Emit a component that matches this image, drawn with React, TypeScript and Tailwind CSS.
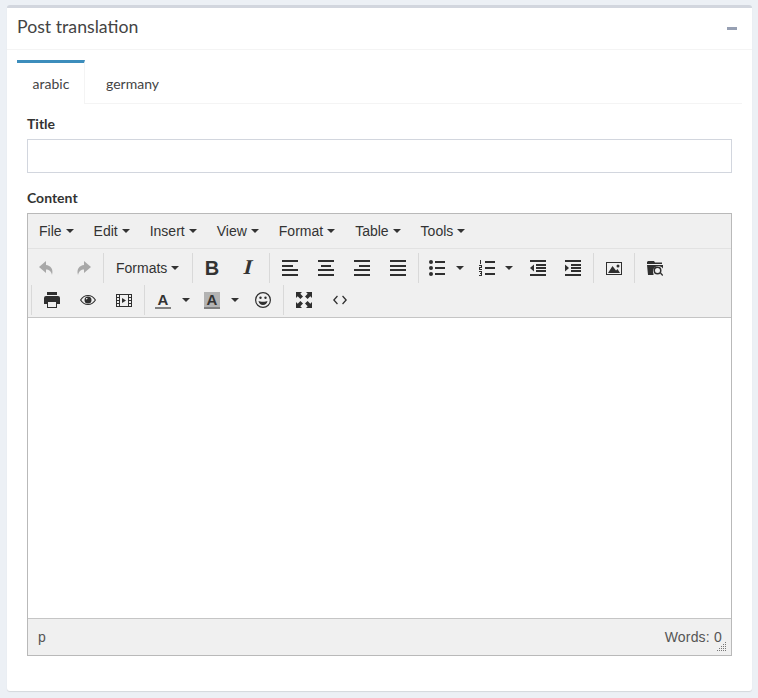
import type { ReactNode } from "react";

const ink = "#2f2f2f";

function Icon({ children, size = 16 }: { children: ReactNode; size?: number }) {
  return (
    <svg width={size} height={size} viewBox="0 0 16 16" fill={ink}>
      {children}
    </svg>
  );
}

function Caret({ color = "#333333" }: { color?: string }) {
  return (
    <svg width="8" height="4" viewBox="0 0 8 4" className="shrink-0">
      <path d="M0 0h8L4 4z" fill={color} />
    </svg>
  );
}

function Btn({ children, w = "w-[36px]" }: { children: ReactNode; w?: string }) {
  return <div className={`${w} h-[30px] flex items-center justify-center`}>{children}</div>;
}

function Group({ children, first, className = "pl-px pr-[2px]" }: { children: ReactNode; first?: boolean; className?: string }) {
  return (
    <div className={`flex h-[30px] ${className} ${first ? "" : "border-l border-[#d9d9d9]"}`}>
      {children}
    </div>
  );
}

const Lines = ({ rows }: { rows: [number, number, number][] }) => (
  <Icon>
    {rows.map(([x, y, w], i) => (
      <rect key={i} x={x} y={y} width={w} height="2" />
    ))}
  </Icon>
);

const UndoIcon = () => (
  <Icon>
    <path fill="#a8a8a8" d="M7 1 0 7l7 6V9.500c3 0 5 1.500 6 5.500 1.800-6-1.500-9.500-6-10z" />
  </Icon>
);

const RedoIcon = () => (
  <Icon>
    <path fill="#a8a8a8" d="M9 1l7 6-7 6V9.500c-3 0-5 1.500-6 5.500C1.200 9 4.500 5.500 9 5z" />
  </Icon>
);

const BulletIcon = () => (
  <Icon>
    <circle cx="2" cy="2" r="2" />
    <circle cx="2" cy="8" r="2" />
    <circle cx="2" cy="14" r="2" />
    <rect x="6" y="1" width="10" height="2" />
    <rect x="6" y="7" width="10" height="2" />
    <rect x="6" y="13" width="10" height="2" />
  </Icon>
);

const NumberIcon = () => (
  <Icon>
    <rect x="1" y="0" width="1" height="4" />
    <path d="M0 5h3v3H1v1h2v1H0V7h2V6H0zM0 11h3v5H0v-1h2v-1H1v-1h1v-1H0z" />
    <rect x="6" y="1" width="10" height="2" />
    <rect x="6" y="7" width="10" height="2" />
    <rect x="6" y="13" width="10" height="2" />
  </Icon>
);

const OutdentIcon = () => (
  <Icon>
    <rect x="0" y="0" width="16" height="2" />
    <rect x="6" y="4" width="10" height="2" />
    <rect x="6" y="7" width="10" height="2" />
    <rect x="6" y="10" width="10" height="2" />
    <rect x="0" y="14" width="16" height="2" />
    <path d="M4 4.500v7L0 8z" />
  </Icon>
);

const IndentIcon = () => (
  <Icon>
    <rect x="0" y="0" width="16" height="2" />
    <rect x="6" y="4" width="10" height="2" />
    <rect x="6" y="7" width="10" height="2" />
    <rect x="6" y="10" width="10" height="2" />
    <rect x="0" y="14" width="16" height="2" />
    <path d="M0 4.500v7L4 8z" />
  </Icon>
);

const ImageIcon = () => (
  <Icon>
    <path fillRule="evenodd" d="M0 2h16v13H0zM1 3v11h14V3z" />
    <circle cx="12" cy="6" r="1.500" />
    <path d="M2 13 6.500 6l3.500 4.500L11.500 9l2.500 4z" />
  </Icon>
);

const BrowseIcon = () => (
  <Icon>
    <path d="M1 1h6l1 1.500h7V4H0V2z" />
    <path d="M0 5h16v3.500A5.500 5.500 0 0 0 6.500 14v1H1z" />
    <path fillRule="evenodd" d="M10.500 6.500a4 4 0 1 0 0 8 4 4 0 0 0 0-8zm0 1.500a2.500 2.500 0 1 1 0 5 2.500 2.500 0 0 1 0-5z" />
    <path d="M13 13.500l1-1 2.300 2.500-1 1z" />
  </Icon>
);

const PrintIcon = () => (
  <Icon>
    <rect x="3" y="0" width="10" height="3" />
    <path d="M0 6a2 2 0 0 1 2-2h12a2 2 0 0 1 2 2v6h-3V9H3v3H0z" />
    <path fillRule="evenodd" d="M3 9h10v7H3zm1 1v5h8v-5z" />
  </Icon>
);

const EyeIcon = () => (
  <Icon>
    <path fill="none" stroke={ink} strokeWidth="1.100" d="M.6 8C2.400 5 5 3.500 8 3.500S13.600 5 15.400 8C13.600 11 11 12.500 8 12.500S2.400 11 .6 8z" />
    <path fillRule="evenodd" d="M8 4.500a3.500 3.500 0 1 0 0 7 3.500 3.500 0 0 0 0-7zM5.800 6h2L6.500 7.800z" />
  </Icon>
);

const MediaIcon = () => (
  <Icon>
    <path
      fillRule="evenodd"
      d="M0 2h16v13H0zM1 3v2h2V3zm0 3v2h2V6zm0 3v2h2V9zm0 3v2h2v-2zM4 3v11h8V3zm9 0v2h2V3zm0 3v2h2V6zm0 3v2h2V9zm0 3v2h2v-2z"
    />
    <path d="M6 6l4 2.500L6 11z" />
  </Icon>
);

const ForeColorIcon = () => (
  <div className="w-[16px] h-[17px] flex flex-col items-center justify-between">
    <span className="text-[15px] leading-[13px] font-bold text-[#333] mt-px">A</span>
    <div className="w-full h-[2px] bg-[#808080]" />
  </div>
);

const BackColorIcon = () => (
  <div className="w-[16px] h-[17px] flex flex-col items-center justify-between bg-[#b3b3b3]">
    <span className="text-[15px] leading-[13px] font-bold text-[#333] mt-px">A</span>
    <div className="w-full h-[2px] bg-[#808080]" />
  </div>
);

const SmileIcon = () => (
  <Icon>
    <circle cx="8" cy="8" r="7.400" fill="none" stroke={ink} strokeWidth="1.200" />
    <circle cx="5.500" cy="5.800" r="1.200" />
    <circle cx="10.500" cy="5.800" r="1.200" />
    <path d="M3.500 9c1.500 1 7.500 1 9 0-.5 2.500-2.200 4-4.500 4s-4-1.500-4.500-4z" />
  </Icon>
);

const FullscreenIcon = () => (
  <Icon>
    <path d="M0 0h6L4.300 1.700 7 4.400 4.400 7 1.700 4.300 0 6z" />
    <path d="M16 0v6l-1.700-1.700L11.600 7 9 4.400l2.700-2.700L10 0z" />
    <path d="M0 16v-6l1.700 1.700L4.400 9 7 11.600l-2.700 2.700L6 16z" />
    <path d="M16 16h-6l1.700-1.700L9 11.600 11.600 9l2.700 2.700L16 10z" />
  </Icon>
);

const CodeIcon = () => (
  <Icon>
    <path d="M5 3.500 1 8l4 4.500.9-.9L2.800 8l3.100-3.600zM11 3.500l4 4.500-4 4.500-.9-.9L13.200 8l-3.100-3.600z" />
  </Icon>
);

const menus = ["File", "Edit", "Insert", "View", "Format", "Table", "Tools"];

export default function App() {
  return (
    <div className="min-h-[698px] bg-[#ecf0f5] pt-[5px] pl-[7px] pr-[6px] font-['Lato',sans-serif] text-[#333]">
      <div className="h-[686px] bg-white border-t-[3px] border-[#d2d6de] rounded-[3px] shadow-[0_1px_1px_rgba(0,0,0,0.1)]">
        <div className="h-[42px] flex items-center justify-between pl-[10px] pr-[15px] border-b border-[#f4f4f4]">
          <h3 className="text-[17.7px] text-[#444] leading-none mb-[3px]">Post translation</h3>
          <div className="w-[10px] h-[3px] bg-[#97a0b3] mb-[1px]" />
        </div>
        <div className="px-[10px] pt-[10px]">
          <div className="flex h-[44px] border-b border-[#f4f4f4]">
            <div className="w-[68px] h-[44px] border-t-[3px] border-t-[#3c8dbc] border-r border-r-[#f4f4f4] bg-white flex items-center justify-center text-[14px] text-[#444] pl-[1px]">
              arabic
            </div>
            <div className="w-[95px] flex items-center justify-center text-[14px] text-[#444] pt-[3px]">germany</div>
          </div>
          <div className="px-[10px] pt-[11px]">
            <label className="block text-[14px] font-bold leading-[18px] text-[#333]">Title</label>
            <div className="mt-[6px] h-[34px] border border-[#d2d6de] bg-white" />
            <label className="block mt-[16px] text-[14px] font-bold leading-[18px] text-[#333]">Content</label>
            <div className="mt-[6px] h-[443px] border border-[#b9b9b9] flex flex-col font-['Liberation_Sans',sans-serif]">
              <div className="h-[35px] bg-[#f0f0f0] border-b border-[#e2e2e2] flex items-center pl-[11px] gap-[20px] text-[14px] text-[#333] shrink-0">
                {menus.map((m) => (
                  <div key={m} className="flex items-center gap-[4px]">
                    <span>{m}</span>
                    <Caret />
                  </div>
                ))}
              </div>
              <div className="h-[69px] bg-[#f0f0f0] border-b border-[#c5c5c5] shrink-0 pt-[4px] flex flex-col gap-[2px]">
                <div className="flex">
                  <Group first>
                    <Btn><UndoIcon /></Btn>
                    <Btn><RedoIcon /></Btn>
                  </Group>
                  <Group>
                    <div className="w-[85px] h-[30px] flex items-center gap-[4px] pl-[11px] text-[14px] text-[#333]">
                      <span>Formats</span>
                      <Caret />
                    </div>
                  </Group>
                  <Group className="pl-px pr-[3px]">
                    <Btn><span className="font-bold text-[20px] text-[#333]">B</span></Btn>
                    <Btn><span className="inline-block -skew-x-[14deg] font-['Liberation_Serif',serif] font-bold text-[21px] text-[#333]">I</span></Btn>
                  </Group>
                  <Group className="pl-[2px] pr-[2px]">
                    <Btn><Lines rows={[[0, 0, 16], [0, 5, 11], [0, 9, 16], [0, 14, 16]]} /></Btn>
                    <Btn><Lines rows={[[0, 0, 16], [3, 5, 10], [0, 9, 16], [0, 14, 16]]} /></Btn>
                    <Btn><Lines rows={[[0, 0, 16], [5, 5, 11], [0, 9, 16], [0, 14, 16]]} /></Btn>
                    <Btn><Lines rows={[[0, 0, 16], [0, 5, 16], [0, 9, 16], [0, 14, 16]]} /></Btn>
                  </Group>
                  <Group>
                    <div className="w-[50px] h-[30px] flex items-center pl-[9px] gap-[11px]"><BulletIcon /><Caret /></div>
                    <div className="w-[50px] h-[30px] flex items-center pl-[9px] gap-[10px]"><NumberIcon /><Caret /></div>
                    <Btn w="w-[35px]"><OutdentIcon /></Btn>
                    <Btn><IndentIcon /></Btn>
                  </Group>
                  <Group className="pl-[2px] pr-[2px]">
                    <Btn><ImageIcon /></Btn>
                  </Group>
                  <Group className="pl-[2px] pr-[2px]">
                    <Btn><BrowseIcon /></Btn>
                  </Group>
                </div>
                <div className="flex pl-[3px]">
                  <Group className="pl-[2px] pr-[2px]">
                    <Btn><PrintIcon /></Btn>
                    <Btn><EyeIcon /></Btn>
                    <Btn><MediaIcon /></Btn>
                  </Group>
                  <Group className="pl-px pr-px">
                    <div className="w-[48px] h-[30px] flex items-center pl-[9px] gap-[11px]"><ForeColorIcon /><Caret /></div>
                    <div className="w-[50px] h-[30px] flex items-center pl-[10px] gap-[11px]"><BackColorIcon /><Caret /></div>
                    <Btn w="w-[38px]"><SmileIcon /></Btn>
                  </Group>
                  <Group>
                    <Btn w="w-[38px]"><FullscreenIcon /></Btn>
                    <Btn w="w-[34px]"><CodeIcon /></Btn>
                  </Group>
                </div>
              </div>
              <div className="flex-1 bg-white" />
              <div className="relative h-[37px] bg-[#f0f0f0] border-t border-[#c5c5c5] shrink-0 flex items-center justify-between pl-[10px] pr-[9px] text-[14px] text-[#555]">
                <span>p</span>
                <span className="tracking-[0.2px]">Words: 0</span>
                <svg className="absolute right-[4px] bottom-[3px]" width="10" height="10" viewBox="0 0 10 10" fill="#777">
                  <rect x="8" y="0" width="1" height="1" />
                  <rect x="6" y="2" width="1" height="1" />
                  <rect x="8" y="2" width="1" height="1" />
                  <rect x="4" y="4" width="1" height="1" />
                  <rect x="6" y="4" width="1" height="1" />
                  <rect x="8" y="4" width="1" height="1" />
                  <rect x="2" y="6" width="1" height="1" />
                  <rect x="4" y="6" width="1" height="1" />
                  <rect x="6" y="6" width="1" height="1" />
                  <rect x="8" y="6" width="1" height="1" />
                  <rect x="0" y="8" width="1" height="1" />
                  <rect x="2" y="8" width="1" height="1" />
                  <rect x="4" y="8" width="1" height="1" />
                  <rect x="6" y="8" width="1" height="1" />
                  <rect x="8" y="8" width="1" height="1" />
                </svg>
              </div>
            </div>
          </div>
        </div>
      </div>
    </div>
  );
}
